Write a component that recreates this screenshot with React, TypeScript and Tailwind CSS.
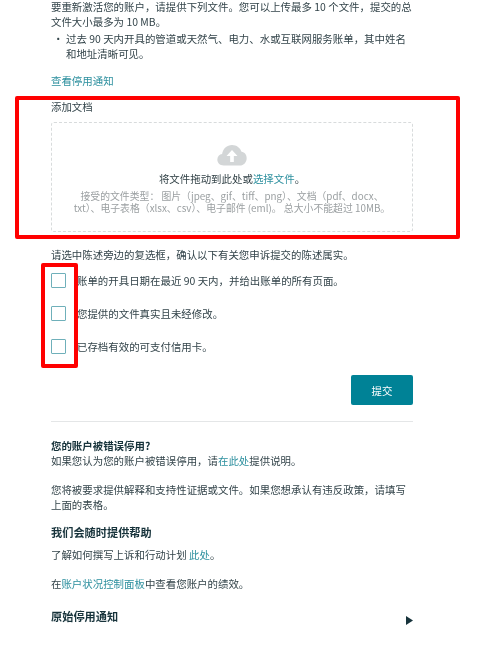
export default function App() {
  const cjk = "font-['Noto_Sans_CJK_SC','Noto_Sans',sans-serif]";
  const link = "text-[#2c8f9e]";
  return (
    <div className={`relative h-[651px] w-[480px] overflow-hidden bg-white text-[10.45px] leading-[15px] text-[#33444a] blur-[0.35px] ${cjk}`}>
      <div className="ml-[51px] w-[362px] -mt-px">
        <p className="whitespace-nowrap">要重新激活您的账户，请提供下列文件。您可以上传最多 10 个文件，提交的总<br />文件大小最多为 10 MB。</p>
        <div className="mt-[2px] flex">
          <span className="w-[15px] pl-[2px]">•</span>
          <p className="whitespace-nowrap">过去 90 天内开具的管道或天然气、电力、水或互联网服务账单，其中姓名<br />和地址清晰可见。</p>
        </div>
        <p className={`mt-[12px] ${link}`}>查看停用通知</p>

        <p className="mt-[11px]">添加文档</p>
        <div className="mt-[8px] flex h-[110px] flex-col items-center rounded-[3px] border-[1.5px] border-dashed border-[#d8dbdc] pt-[21px]">
          <svg width="32" height="22" viewBox="0 0 34 24" aria-hidden="true">
            <path d="M8 23.5C3.5 23.5 1 20.5 1 17c0-3.2 2.2-5.6 5.2-6C7 5 11.5 1 17 1c5 0 9 3 10.4 7.5 3.4.4 5.6 3.4 5.6 7 0 4.4-3.2 8-7.5 8Z" fill="#d3d6d7" />
            <path d="M17 6.5 11 13h4v6.5h4V13h4Z" fill="#ffffff" />
          </svg>
          <p className="mt-[5px] text-[#2f3f44]">将文件拖动到此处或<span className={link}>选择文件</span>。</p>
          <p className="mt-[4px] w-[330px] whitespace-nowrap text-center text-[9.85px] leading-[12px] text-[#9a9fa1]">接受的文件类型： 图片（jpeg、gif、tiff、png）、文档（pdf、docx、<br />txt）、电子表格（xlsx、csv）、电子邮件 (eml)。 总大小不能超过 10MB。</p>
        </div>

        <p className="mt-[15px]">请选中陈述旁边的复选框，确认以下有关您申诉提交的陈述属实。</p>
        <div className="mt-[11px] flex flex-col gap-[18px]">
          {["账单的开具日期在最近 90 天内，并给出账单的所有页面。", "您提供的文件真实且未经修改。", "已存档有效的可支付信用卡。"].map((t) => (
            <label key={t} className="flex items-center gap-[11px]">
              <span className="h-[15px] w-[15px] rounded-[1px] border border-[#6fb0ba] bg-white" />
              <span>{t}</span>
            </label>
          ))}
        </div>
        <div className="mt-[21px] flex justify-end">
          <button className="h-[30px] w-[62px] rounded-[2px] bg-[#008296] text-[10.45px] text-white">提交</button>
        </div>
        <hr className="mt-[16px] border-t border-[#e4e6e7]" />

        <p className="mt-[16px] font-bold text-[#17333b]">您的账户被错误停用?</p>
        <p>如果您认为您的账户被错误停用，请<span className={link}>在此处</span>提供说明。</p>
        <p className="mt-[14px] whitespace-nowrap">您将被要求提供解释和支持性证据或文件。如果您想承认有违反政策，请填写<br />上面的表格。</p>
        <h2 className="mt-[13px] text-[11.2px] leading-[15px] font-bold text-[#17333b]">我们会随时提供帮助</h2>
        <p className="mt-[7px]">了解如何撰写上诉和行动计划 <span className={link}>此处</span>。</p>
        <p className="mt-[14px]"><span>在</span><span className={link}>账户状况控制面板</span>中查看您账户的绩效。</p>
        <div className="mt-[17px] flex items-center justify-between">
          <h2 className="text-[11.2px] leading-[15px] font-bold text-[#17333b]">原始停用通知</h2>
          <svg width="7" height="9" viewBox="0 0 7 9" className="mt-[8px]" aria-hidden="true"><path d="M0 0 7 4.5 0 9Z" fill="#17333b" /></svg>
        </div>
      </div>

      <div className="absolute left-[15px] top-[96px] h-[143px] w-[445px] rounded-[2px] border-4 border-[#ff0000]" />
      <div className="absolute left-[41px] top-[263px] h-[105px] w-[37px] rounded-[2px] border-4 border-[#ff0000]" />
    </div>
  );
}
